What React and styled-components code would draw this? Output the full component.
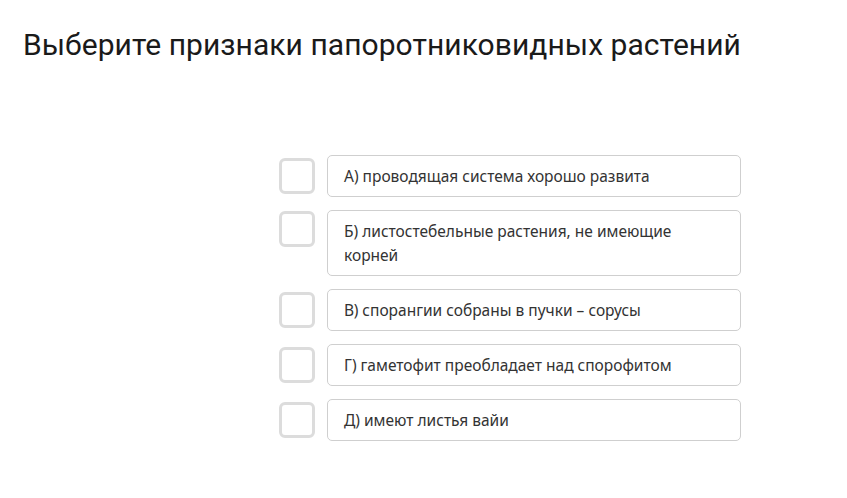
import React from "react";
import styled, { createGlobalStyle } from "styled-components";

const Global = createGlobalStyle`
  html, body { margin: 0; padding: 0; background: #fff; }
  body { width: 847px; height: 498px; overflow: hidden; }
`;

const Page = styled.div`
  padding: 26px 0 0 23px;
  box-sizing: border-box;
`;

const Title = styled.h1`
  margin: 0;
  font-family: Roboto, "Liberation Sans", sans-serif;
  font-weight: 400;
  font-size: 30px;
  line-height: 38px;
  color: #1a1a1a;
  letter-spacing: 0.05px;
`;

const List = styled.div`
  display: flex;
  flex-direction: column;
  gap: 13px;
  margin: 91px 0 0 256px;
  width: 462px;
`;

const Row = styled.label`
  display: flex;
  align-items: flex-start;
  gap: 12px;
`;

const Box = styled.span`
  flex: none;
  width: 30px;
  height: 30px;
  margin-top: ${(p) => p.$offset}px;
  border: 3px solid #dcdcdc;
  border-radius: 6px;
  background: #fff;
`;

const Option = styled.div`
  flex: 1;
  border: 1px solid #cfcfcf;
  border-radius: 5px;
  padding: 8px 16px;
  font-family: "Noto Sans", "Open Sans", sans-serif;
  font-size: 15.5px;
  line-height: 24px;
  color: #333;
`;

const items = [
  { text: "А) проводящая система хорошо развита", offset: 3 },
  { text: "Б) листостебельные растения, не имеющие корней", offset: 1 },
  { text: "В) спорангии собраны в пучки – сорусы", offset: 3 },
  { text: "Г) гаметофит преобладает над спорофитом", offset: 3 },
  { text: "Д) имеют листья вайи", offset: 3 },
];

export default function App() {
  return (
    <>
      <Global />
      <Page>
        <Title>Выберите признаки папоротниковидных растений</Title>
        <List>
          {items.map((it) => (
            <Row key={it.text}>
              <Box $offset={it.offset} />
              <Option>{it.text}</Option>
            </Row>
          ))}
        </List>
      </Page>
    </>
  );
}
